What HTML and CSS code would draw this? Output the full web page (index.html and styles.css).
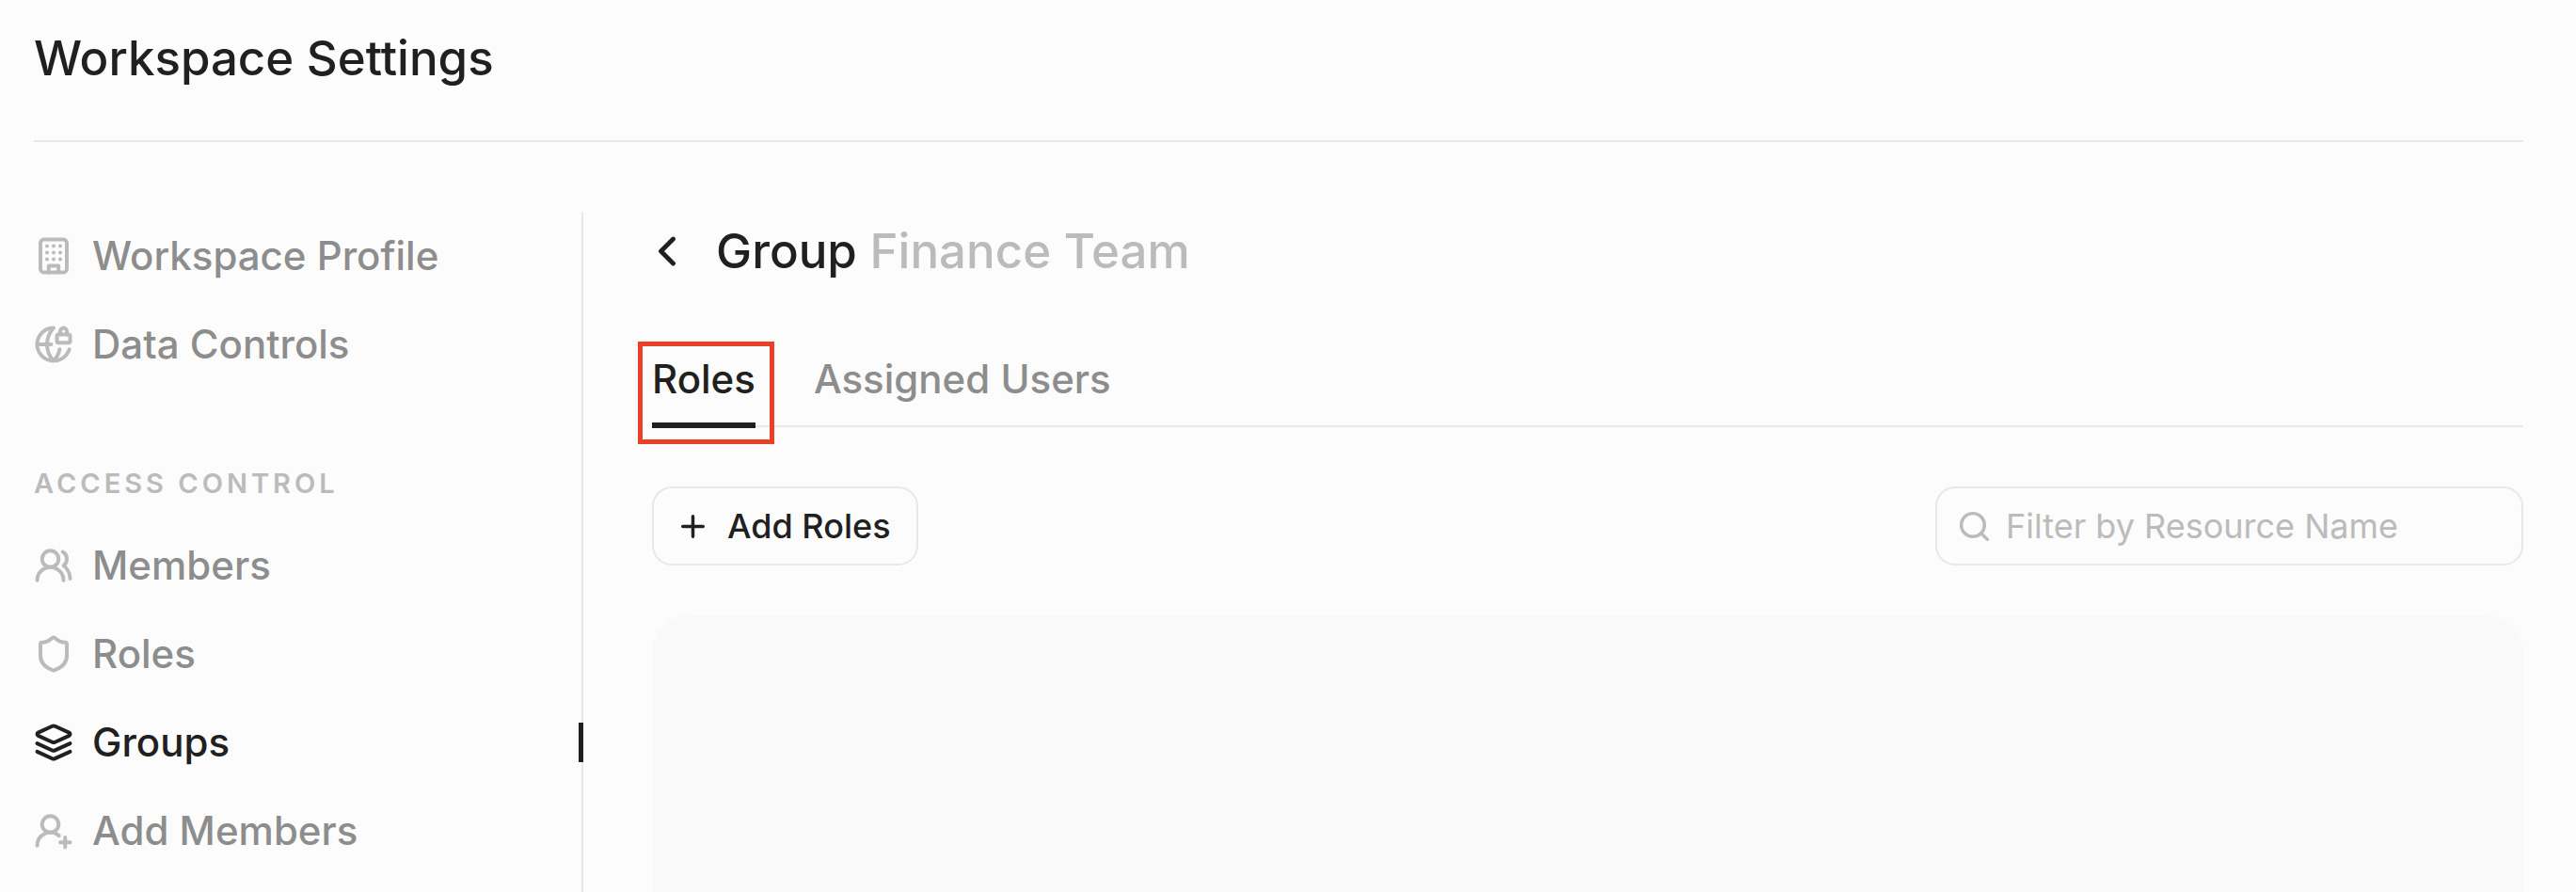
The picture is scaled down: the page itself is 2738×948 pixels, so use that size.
FILE: index.html
```
<!DOCTYPE html>
<html lang="en">
    <head>
        <meta charset="UTF-8">
        <meta name="viewport" content="width=device-width, initial-scale=1.0">
        <title>Workspace Settings</title>
        <link rel="stylesheet" href="styles.css">
    </head>
    <body>
        <header class="page-header">
            <h1>Workspace Settings</h1>
        </header>

        <div class="layout">
            <nav class="sidebar" aria-label="Settings">
                <ul class="nav-list">
                    <li>
                        <a href="#profile" class="nav-link">
                            <svg class="icon" viewBox="0 0 24 24" aria-hidden="true">
                                <rect x="4" y="2" width="16" height="20" rx="2"/>
                                <path d="M9 22v-4h6v4"/>
                                <path d="M8 6h.01M12 6h.01M16 6h.01M8 10h.01M12 10h.01M16 10h.01M8 14h.01M12 14h.01M16 14h.01"/>
                            </svg>
                            Workspace Profile
                        </a>
                    </li>
                    <li>
                        <a href="#data" class="nav-link">
                            <svg class="icon" viewBox="0 0 24 24" aria-hidden="true">
                                <path d="M15.686 15A14.5 14.5 0 0 1 12 22a14.5 14.5 0 0 1 0-20 10 10 0 1 0 9.542 13"/>
                                <path d="M2 12h8.5"/>
                                <path d="M20 6V4a2 2 0 1 0-4 0v2"/>
                                <rect x="14" y="6" width="8" height="5" rx="1"/>
                            </svg>
                            Data Controls
                        </a>
                    </li>
                </ul>

                <h2 class="nav-heading">Access Control</h2>
                <ul class="nav-list">
                    <li>
                        <a href="#members" class="nav-link">
                            <svg class="icon" viewBox="0 0 24 24" aria-hidden="true">
                                <path d="M18 21a8 8 0 0 0-16 0"/>
                                <circle cx="10" cy="8" r="5"/>
                                <path d="M22 20c0-3.37-2-6.5-4-8a5 5 0 0 0-.45-8.3"/>
                            </svg>
                            Members
                        </a>
                    </li>
                    <li>
                        <a href="#roles" class="nav-link">
                            <svg class="icon" viewBox="0 0 24 24" aria-hidden="true">
                                <path d="M20 13c0 5-3.5 7.5-7.66 8.95a1 1 0 0 1-.67-.01C7.5 20.5 4 18 4 13V6a1 1 0 0 1 1-1c2 0 4.5-1.2 6.24-2.72a1.17 1.17 0 0 1 1.52 0C14.51 3.81 17 5 19 5a1 1 0 0 1 1 1z"/>
                            </svg>
                            Roles
                        </a>
                    </li>
                    <li>
                        <a href="#groups" class="nav-link active" aria-current="page">
                            <svg class="icon" viewBox="0 0 24 24" aria-hidden="true">
                                <path d="M12.83 2.18a2 2 0 0 0-1.66 0L2.6 6.08a1 1 0 0 0 0 1.83l8.58 3.91a2 2 0 0 0 1.66 0l8.58-3.9a1 1 0 0 0 0-1.83Z"/>
                                <path d="m22 12.65-9.17 4.16a2 2 0 0 1-1.66 0L2 12.65"/>
                                <path d="m22 17.65-9.17 4.16a2 2 0 0 1-1.66 0L2 17.65"/>
                            </svg>
                            Groups
                        </a>
                    </li>
                    <li>
                        <a href="#add-members" class="nav-link">
                            <svg class="icon" viewBox="0 0 24 24" aria-hidden="true">
                                <path d="M2 21a8 8 0 0 1 13.292-6"/>
                                <circle cx="10" cy="8" r="5"/>
                                <path d="M19 16v6M22 19h-6"/>
                            </svg>
                            Add Members
                        </a>
                    </li>
                </ul>
            </nav>

            <main class="content">
                <div class="group-header">
                    <button type="button" class="back-btn" aria-label="Back">
                        <svg class="icon" viewBox="0 0 24 24" aria-hidden="true"><path d="m15 18-6-6 6-6"/></svg>
                    </button>
                    <h2>Group <span class="group-name">Finance Team</span></h2>
                </div>

                <div class="tabs" role="tablist">
                    <button type="button" class="tab active" role="tab" aria-selected="true">Roles</button>
                    <button type="button" class="tab" role="tab" aria-selected="false">Assigned Users</button>
                </div>

                <div class="toolbar">
                    <button type="button" class="add-btn">
                        <svg class="icon" viewBox="0 0 24 24" aria-hidden="true"><path d="M5 12h14M12 5v14"/></svg>
                        Add Roles
                    </button>
                    <label class="search">
                        <svg class="icon" viewBox="0 0 24 24" aria-hidden="true"><circle cx="11" cy="11" r="8"/><path d="m21 21-4.3-4.3"/></svg>
                        <input type="text" placeholder="Filter by Resource Name" aria-label="Filter by Resource Name">
                    </label>
                </div>

                <section class="panel" aria-label="Group roles"></section>
            </main>
        </div>
    </body>
</html>
```

FILE: styles.css
```
:root {
    --bg: #fcfcfc;
    --panel: #f9f9f9;
    --line: #e8e8e8;
    --text: #202020;
    --muted: #8d8d8d;
    --faint: #bbbbbb;
    --highlight: #eb4025;
}

* {
    box-sizing: border-box;
}

body {
    display: flex;
    flex-direction: column;
    min-height: 100vh;
    margin: 0;
    padding: 0 56px 0 36px;
    background: var(--bg);
    color: var(--text);
    font-family: Inter, "Liberation Sans", sans-serif;
    font-size: 42px;
    font-weight: 500;
    line-height: 42px;
}

h1, h2 {
    margin: 0;
    font-size: 51px;
    font-weight: 500;
    line-height: 64px;
}

button, input {
    padding: 0;
    border: none;
    background: none;
    color: inherit;
    font: inherit;
}
button {
    cursor: pointer;
}

.icon {
    flex: none;
    width: 42px;
    height: 42px;
    fill: none;
    stroke: currentColor;
    stroke-width: 2.25;
    stroke-linecap: round;
    stroke-linejoin: round;
}

.page-header {
    padding: 30px 0 55px;
    border-bottom: 2px solid var(--line);
}

.layout {
    display: flex;
    flex: 1;
    margin-top: 74px;
}

/* sidebar */
.sidebar {
    flex: none;
    width: 584px;
    padding-top: 26px;
    border-right: 2px solid var(--line);
}
.nav-list {
    display: flex;
    flex-direction: column;
    gap: 52px;
    margin: 0;
    padding: 0;
    list-style: none;
}
.nav-link {
    position: relative;
    display: flex;
    align-items: center;
    gap: 20px;
    color: var(--muted);
    text-decoration: none;
}
.nav-link .icon {
    color: var(--faint);
}
.nav-link.active,
.nav-link.active .icon {
    color: var(--text);
}
.nav-link.active::after {
    content: "";
    position: absolute;
    top: 0;
    right: -2px;
    width: 5px;
    height: 100%;
    background: var(--text);
}
.nav-heading {
    margin: 106px 0 45px;
    color: var(--faint);
    font-size: 29px;
    font-weight: 600;
    letter-spacing: 4px;
    line-height: 42px;
    text-transform: uppercase;
}

/* content */
.content {
    display: flex;
    flex: 1;
    flex-direction: column;
    min-width: 0;
    padding-left: 73px;
}
.group-header {
    display: flex;
    align-items: center;
    gap: 36px;
    padding-top: 10px;
}
.back-btn {
    display: flex;
    justify-content: center;
    width: 32px;
}
.back-btn .icon {
    width: 52px;
    height: 52px;
}
.group-name {
    color: var(--faint);
}

.tabs {
    display: flex;
    gap: 62px;
    margin-top: 82px;
    border-bottom: 2px solid var(--line);
}
.tab {
    position: relative;
    height: 71px;
    padding-bottom: 27px;
    color: var(--muted);
    line-height: 44px;
}
.tab.active {
    color: var(--text);
}
.tab.active::after {
    content: "";
    position: absolute;
    right: 0;
    bottom: -3px;
    left: 0;
    height: 6px;
    background: var(--text);
}
/* callout frame round the selected tab */
.tab.active::before {
    content: "";
    position: absolute;
    top: -18px;
    right: -20px;
    bottom: -20px;
    left: -15px;
    border: 5px solid var(--highlight);
}

.toolbar {
    display: flex;
    justify-content: space-between;
    margin-top: 63px;
}
.add-btn,
.search {
    display: flex;
    align-items: center;
    height: 84px;
    border: 2px solid var(--line);
    border-radius: 21px;
    font-size: 36px;
}
.toolbar .icon {
    width: 37px;
    height: 37px;
}
.add-btn {
    gap: 18px;
    padding: 0 27px 0 23px;
}
.search {
    gap: 15px;
    width: 625px;
    padding: 0 21px;
    color: var(--faint);
    font-weight: 400;
}
.search input {
    flex: 1;
    min-width: 0;
    outline: none;
    color: var(--text);
}
.search input::placeholder {
    color: var(--faint);
    opacity: 1;
}

.panel {
    flex: 1;
    min-height: 294px;
    margin-top: 52px;
    border-radius: 42px 42px 0 0;
    background: var(--panel);
}
```
